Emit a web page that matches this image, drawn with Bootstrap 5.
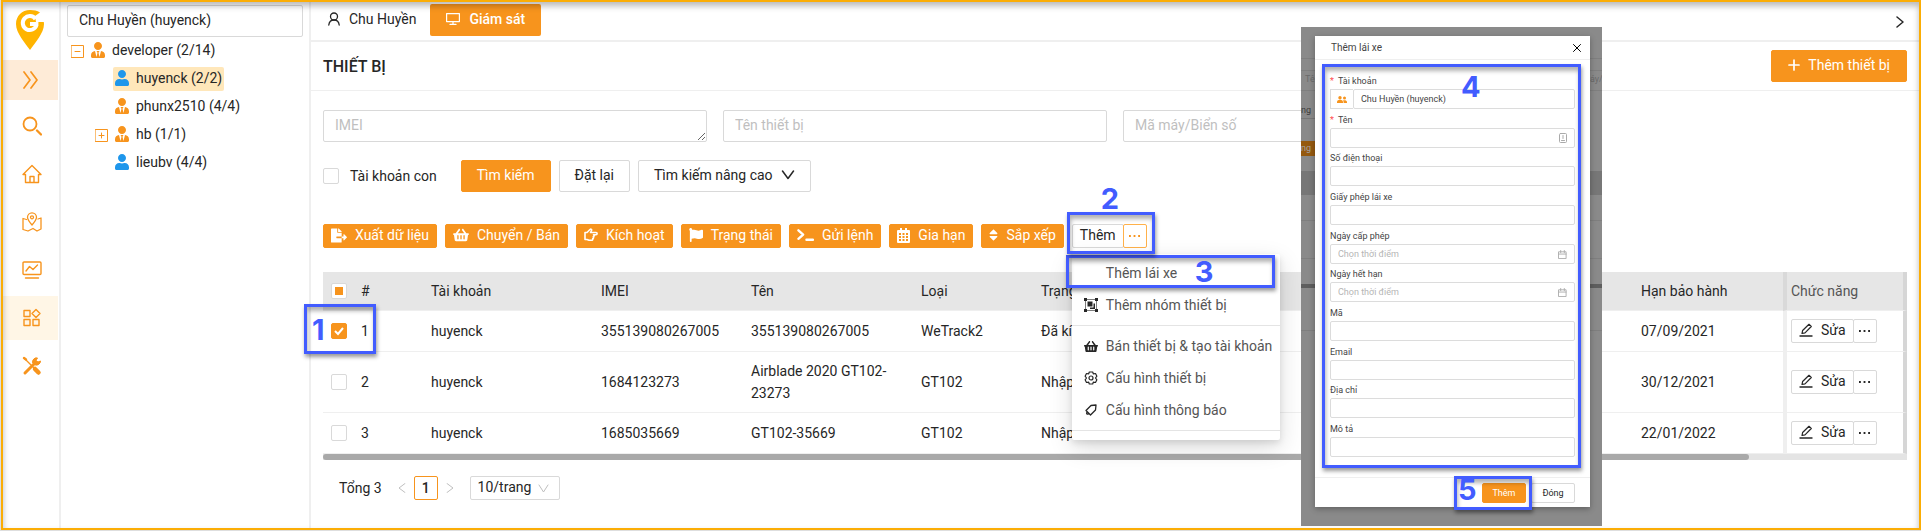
<!DOCTYPE html>
<html lang="vi">
<head>
<meta charset="utf-8">
<meta name="viewport" content="width=device-width, initial-scale=1">
<title>Thiết bị</title>
<link rel="stylesheet" href="https://cdn.jsdelivr.net/npm/bootstrap@5.3.0/dist/css/bootstrap.min.css">
<style>
:root { --brand: #f7941d; --line: #d9d9d9; --soft: #efefef; --mark-blue: #425cff; }
body { font: 400 14px/22px Roboto, "Open Sans", sans-serif; color: #262626; background: #dedede; }
a { color: inherit; text-decoration: none; }
svg { flex: none; display: block; }
.ic { fill: currentColor; }
.ln { fill: none; stroke: currentColor; stroke-linecap: round; stroke-linejoin: round; }

.frame { margin: 0 0 1px 1px; min-height: calc(100vh - 1px); border: 2px solid #fbad05; background: #fff; }
.frame::after { content: ""; position: absolute; inset: 0; pointer-events: none; z-index: 30; box-shadow: inset 0 4px 6px rgba(0,0,0,.28); }

/* icon rail */
.rail { width: 58px; border-right: 2px solid var(--soft); color: var(--brand); }
.rail-logo { height: 58px; padding: 8px 0 0 13px; }
.rail-link { height: 44px; margin-right: 1px; padding-left: 3px; display: flex; align-items: center; justify-content: center; }
.rail-toggle { height: 40px; padding-left: 0; background: #feebd7; }
.rail-link.active { background: #fff6e6; }

/* account tree */
.side { width: 250px; border-right: 2px solid var(--soft); padding: 3px 6px 0; }
.field { border: 1px solid var(--line); border-radius: 2px; height: 32px; padding: 3px 11px 5px; font-size: 14px; line-height: 22px; color: #262626; width: 100%; background: #fff; }
.field::placeholder { color: #bfbfbf; opacity: 1; }
.tree { list-style: none; margin: 0; padding: 0; }
.tree .tree { padding-left: 24px; }
.tree-row { height: 28px; display: flex; align-items: center; padding-left: 4px; }
.tree-box { width: 18px; color: var(--brand); }
.tree-name { height: 24px; display: flex; align-items: center; gap: 7px; padding: 0 2px 2px; border-radius: 2px; white-space: nowrap; }
.tree-name.active { background: #ffe7ba; }

/* main */
.tabs { height: 40px; border-bottom: 2px solid var(--soft); padding: 2px 15px 0 6px; }
.tab-item { height: 32px; padding: 0 14px 2px 11px; display: flex; align-items: center; gap: 9px; }
.tab-item.active { background: var(--brand); color: #fff; border-radius: 2px; padding: 0 16px 2px; font-weight: 500; }
.head { height: 49px; border-bottom: 1px solid var(--soft); padding: 0 12px; }
.head h1 { font-size: 16px; line-height: 24px; font-weight: 500; margin: 0; padding-top: 2px; }
.bt { height: 32px; border: 1px solid var(--line); border-radius: 2px; background: #fff; color: #262626; padding: 0 15px 2px; font-size: 14px; line-height: 22px; display: inline-flex; align-items: center; justify-content: center; gap: 8px; white-space: nowrap; }
.bt-main { background: var(--brand); border-color: var(--brand); color: #fff; }
.bt-low { height: 24px; padding: 0 7px 2px; }
.bt-dots { width: 24px; margin-left: -1px; padding-bottom: 0; }
.bt-lit { border-color: #ffb14a; }
.c-orange { color: var(--brand); } .c-blue { color: #1e96eb; }
.content { padding: 19px 12px 0; }
.filters { margin-top: 18px; }
.with-tick { gap: 11px; }
.tick { appearance: none; width: 16px; height: 16px; border: 1px solid var(--line); border-radius: 2px; margin: 0; background: #fff center/contain no-repeat; flex: none; display: block; }
.tick:checked { background-color: var(--brand); border-color: var(--brand); background-image: url("data:image/svg+xml,%3Csvg xmlns='http://www.w3.org/2000/svg' viewBox='0 0 14 14'%3E%3Cpath d='M3 7l3 3 5-6' fill='none' stroke='white' stroke-width='2'/%3E%3C/svg%3E"); }
.tick:indeterminate { background: linear-gradient(var(--brand), var(--brand)) center/8px 8px no-repeat #fff; }

.grid-wrap { margin-top: 24px; }
.devices { width: 100%; table-layout: fixed; border-collapse: separate; border-spacing: 0; }
.devices th, .devices td { padding: 8px; border-bottom: 1px solid var(--soft); font-weight: 400; vertical-align: middle; }
.devices th { background: #e6e6e6; }
.devices tbody td { padding: 9px 8px; }
.devices tbody .two-line { padding: 8px; }
.devices tr > :last-child { border-left: 4px solid var(--soft); border-right: 4px solid #d6d6d6; padding: 0 4px; }
.devices th:last-child { border-left-color: #d9d9d9; color: #555; }
.track { height: 6px; background: #e4e4e4; }
.thumb { height: 6px; width: 90%; background: #a9a9a9; border-radius: 3px; }

.pager { color: #bfbfbf; }
.total { color: #262626; margin-right: 16px; }
.page-now { color: #262626; width: 24px; height: 24px; border: 1px solid var(--brand); border-radius: 2px; display: flex; align-items: center; justify-content: center; font-weight: 500; margin: 0 8px; }
.sizer { position: relative; margin-left: 16px; }
.sizer select { appearance: none; width: 90px; height: 24px; padding: 0 7px 2px; line-height: 20px; }
.sizer svg { position: absolute; right: 11px; top: 8px; pointer-events: none; }

/* drop-down over the table */
.more { position: absolute; top: 30px; left: 0; width: 208px; padding: 3px 0 5px; background: #fff; z-index: 5; border-radius: 2px; box-shadow: 0 3px 6px rgba(0,0,0,.1), 0 8px 24px rgba(0,0,0,.14); color: #555; }
.more a { height: 32px; display: flex; align-items: center; gap: 8px; padding-left: 12px; white-space: nowrap; }
.more svg { color: #262626; }
.more hr { margin: 4px 0; border: 0; border-top: 1px solid #e4e4e4; opacity: 1; }

/* numbered guide marks */
.guide { position: absolute; border: 3px solid var(--mark-blue); pointer-events: none; z-index: 8; box-shadow: 1px 3px 4px rgba(0,0,0,.4), inset 1px 4px 4px rgba(0,0,0,.3); }
.guide b { position: absolute; font: 700 29px/24px Inter, "Open Sans", sans-serif; color: var(--mark-blue); }
.g1 { left: -27px; top: -19px; width: 72px; height: 50px; } .g1 b { left: 5px; top: 11px; }
.g2 { left: -5px; top: -12px; width: 88px; height: 42px; } .g2 b { left: 31px; top: -28px; }
.g3 { left: -6px; top: 1px; width: 209px; height: 33px; } .g3 b { left: 126px; top: 2px; }
.g4 { inset: 4px 9px 9px 7px; } .g4 b { left: 136px; top: 8px; }
.g5 { left: -28px; top: -7px; width: 78px; height: 34px; } .g5 b { left: 1px; top: -1px; }

/* floating form */
.veil { position: absolute; top: 25px; bottom: 2px; right: 317px; width: 301px; z-index: 10; overflow: hidden; padding: 9px 12px 19px 14px; color: #3c3c3c;
  background:
    linear-gradient(#7f7f7f, #7f7f7f) 0 31px/100% 1px no-repeat,
    linear-gradient(#7f7f7f, #7f7f7f) 0 43px/100% 1px no-repeat,
    linear-gradient(#7f7f7f, #7f7f7f) 0 63px/100% 1px no-repeat,
    linear-gradient(#777, #777) 0 144px/100% 24px no-repeat,
    linear-gradient(#7f7f7f, #7f7f7f) 0 193px/100% 1px no-repeat,
    linear-gradient(#7f7f7f, #7f7f7f) 0 231px/100% 1px no-repeat,
    linear-gradient(#5e5e5e, #5e5e5e) 0 257px/100% 4px no-repeat,
    linear-gradient(#7f7f7f, #7f7f7f) 0 303px/100% 1px no-repeat,
    #8a8a8a; }
.ghost { position: absolute; font-size: 9px; line-height: 15px; left: 0; white-space: nowrap; }
.gh-a { top: 45px; left: 4px; color: #6b6b6b; }
.gh-b { top: 76px; border-bottom: 1px solid #777; width: 14px; }
.gh-c { top: 114px; width: 14px; background: #95590f; color: #a3a3a3; }
.gh-d { top: 45px; left: 289px; color: #6b6b6b; }
.sheet { position: relative; height: 100%; background: #fff; font-size: 9px; line-height: 12px; box-shadow: 0 2px 6px rgba(0,0,0,.3); color: #444; }
.sheet-head { height: 24px; border-bottom: 1px solid var(--soft); padding: 0 9px 0 16px; }
.sheet-head h2 { font-size: 10px; line-height: 12px; font-weight: 400; margin: 0; }
.sheet-close { border: 0; background: none; padding: 0; }
.sheet-body { padding: 15px 15px 20px; }
.sheet-body .field, .sheet .bt { height: 20px; padding: 0 7px; font-size: 9px; line-height: 12px; }
.sheet-body .field { display: block; flex: 1; min-width: 0; color: #444; border-color: #dcdcdc; }
.sheet-body .field::placeholder { color: #b5b5b5; }
.sheet-body label { display: block; margin-bottom: 2px; }
.sheet-body .must::before { content: "*"; color: #ff4d4f; margin-right: 4px; }
.addon { width: 23px; border: 1px solid #dcdcdc; border-right: 0; display: flex; align-items: center; justify-content: center; color: var(--brand); }
.in-end { position: absolute; right: 8px; bottom: 5px; color: #aaa; }
.sheet-foot { height: 30px; border-top: 1px solid var(--soft); padding: 0 15px; gap: 5px; }
.sheet-foot .bt { width: 44px; }
</style>
<script src="https://cdn.jsdelivr.net/npm/bootstrap@5.3.0/dist/js/bootstrap.bundle.min.js"></script>
</head>
<body>
<svg width="0" height="0" class="position-absolute" aria-hidden="true">
  <symbol id="tie" viewBox="0 0 448 512"><path d="M224 256c70.700 0 128-57.300 128-128S294.700 0 224 0 96 57.300 96 128s57.300 128 128 128zm95.800 32.600L272 480l-32-136 32-56h-96l32 56-32 136-47.800-191.400C56.900 292 0 350.300 0 422.400V464c0 26.500 21.500 48 48 48h352c26.500 0 48-21.500 48-48v-41.600c0-72.100-56.900-130.400-128.200-133.800z"/></symbol>
  <symbol id="user" viewBox="0 0 448 512"><path d="M224 256c70.700 0 128-57.300 128-128S294.700 0 224 0 96 57.300 96 128s57.300 128 128 128zm89.600 32h-16.700c-22.200 10.200-46.900 16-72.900 16s-50.600-5.800-72.900-16h-16.700C60.200 288 0 348.200 0 422.400V464c0 26.500 21.500 48 48 48h352c26.500 0 48-21.500 48-48v-41.600c0-74.200-60.200-134.400-134.400-134.400z"/></symbol>
  <symbol id="basket" viewBox="0 0 576 512"><path d="M576 216v16c0 13.255-10.745 24-24 24h-8l-26.113 182.788C514.509 462.435 494.257 480 470.370 480H105.630c-23.887 0-44.139-17.565-47.518-41.212L32 256h-8c-13.255 0-24-10.745-24-24v-16c0-13.255 10.745-24 24-24h67.341l106.780-146.821c10.395-14.292 30.407-17.453 44.701-7.058 14.293 10.395 17.453 30.408 7.058 44.701L170.477 192h235.046L326.120 82.821c-10.395-14.292-7.234-34.306 7.059-44.701 14.291-10.395 34.306-7.235 44.701 7.058L484.659 192H552c13.255 0 24 10.745 24 24zM312 392V280c0-13.255-10.745-24-24-24s-24 10.745-24 24v112c0 13.255 10.745 24 24 24s24-10.745 24-24zm112 0V280c0-13.255-10.745-24-24-24s-24 10.745-24 24v112c0 13.255 10.745 24 24 24s24-10.745 24-24zm-224 0V280c0-13.255-10.745-24-24-24s-24 10.745-24 24v112c0 13.255 10.745 24 24 24s24-10.745 24-24z"/></symbol>
  <symbol id="pen" viewBox="0 0 14 14"><path d="M1 13h12" stroke-width="1.400"/><path d="M3 10.500l.6-3L10 1.300l2.300 2.200-6.300 6.300z" stroke-width="1.200"/></symbol>
  <symbol id="dots" viewBox="0 0 12 4"><path d="M0 1h2v2H0zM5 1h2v2H5zM10 1h2v2h-2z"/></symbol>
  <symbol id="cal" viewBox="0 0 10 10"><path d="M1 2h8v7.500H1zM1 4.500h8M3 .5v2.500M7 .5v2.500"/></symbol>
</svg>

<div class="frame position-relative d-flex">
  <nav class="rail flex-shrink-0" aria-label="Chính">
    <a href="#" class="rail-logo d-block" aria-label="Trang chủ">
      <svg width="28" height="40" viewBox="0 0 28 40"><path fill="#ffb400" d="M14 0C6 0 0 6 0 14c0 9 9 19 14 26 5-7 14-17 14-26l-.2-2H20l-1-6 5-3.500C21 .7 18 0 14 0z"/><path fill="none" stroke="#fff" stroke-width="4" d="M19.500 9A7 7 0 1 0 20.500 15M22.400 14H14"/></svg>
    </a>
    <a href="#" class="rail-link rail-toggle" aria-label="Mở rộng"><svg class="ln" width="16" height="18" viewBox="0 0 16 18" stroke-width="1.700"><path d="M1 1l6 8-6 8M8 1l6 8-6 8"/></svg></a>
    <div class="d-flex flex-column gap-1 pt-1">
      <a href="#" class="rail-link" aria-label="Tìm"><svg class="ln" width="20" height="20" viewBox="0 0 20 20" stroke-width="1.800"><circle cx="8" cy="8" r="6.500"/><path d="M15 14.500l4 4" stroke-width="2.300"/></svg></a>
      <a href="#" class="rail-link" aria-label="Nhà"><svg class="ln" width="20" height="20" viewBox="0 0 20 20" stroke-width="1.400"><path d="M1 10.500L10 1.500l9 9h-2.500v8h-13v-8zM8 18v-5.500h4V18"/></svg></a>
      <a href="#" class="rail-link" aria-label="Bản đồ"><svg class="ln" width="20" height="20" viewBox="0 0 20 20" stroke-width="1.300"><path d="M10 13C7 9.500 5.500 7.500 5.500 5.300a4.500 4.500 0 0 1 9 0C14.500 7.500 13 9.500 10 13z"/><circle cx="10" cy="5.300" r="1.500"/><path d="M4.500 7.500L1 6.500v11l5 1.500 5-2.500 4 2.500 4-2V6l-3 1"/></svg></a>
      <a href="#" class="rail-link" aria-label="Báo cáo"><svg class="ln" width="20" height="20" viewBox="0 0 20 20" stroke-width="1.400"><rect x="1" y="2" width="18" height="12.500" rx="1"/><path d="M4 11l3.500-4.500 3.500 3 4.500-4.500M3.500 18h13"/></svg></a>
      <a href="#" class="rail-link active" aria-label="Quản lý"><svg class="ln" width="20" height="20" viewBox="0 0 20 20" stroke-width="1.400"><path d="M2 2.500h6v6H2zM2 11.500h6v6H2zM11 11.500h6v6h-6zM14 1.500l4 4-4 4-4-4z"/></svg></a>
      <a href="#" class="rail-link" aria-label="Công cụ"><svg class="ln" width="20" height="20" viewBox="0 0 20 20"><path d="M3 17L13 7" stroke-width="3"/><path d="M10.500 6.500a4 4 0 0 1 5-4.500l-1.500 2.500 2 1.500 2.500-1a4 4 0 0 1-5 4z" fill="currentColor" stroke-width="1"/><path d="M2.500 2.500l9 9" stroke-width="1.400"/><path d="M2 2l2 1.500" stroke-width="2.400"/><path d="M13 13l3.500 3.500" stroke-width="4.500"/></svg></a>
    </div>
  </nav>

  <aside class="side flex-shrink-0">
    <input class="field d-block" type="text" value="Chu Huyền (huyenck)" aria-label="Tài khoản">
    <ul class="tree">
      <li>
        <div class="tree-row">
          <span class="tree-box"><svg class="ln" width="13" height="13" viewBox="0 0 13 13"><path d="M.5.5h12v12H.5zM4 6.500h5"/></svg></span>
          <a href="#" class="tree-name"><svg class="ic c-orange" width="14" height="16"><use href="#tie"/></svg>developer (2/14)</a>
        </div>
        <ul class="tree">
          <li class="tree-row"><span class="tree-box"></span><a href="#" class="tree-name active"><svg class="ic c-blue" width="14" height="16"><use href="#user"/></svg>huyenck (2/2)</a></li>
          <li class="tree-row"><span class="tree-box"></span><a href="#" class="tree-name"><svg class="ic c-orange" width="14" height="16"><use href="#tie"/></svg>phunx2510 (4/4)</a></li>
          <li class="tree-row"><span class="tree-box"><svg class="ln" width="13" height="13" viewBox="0 0 13 13"><path d="M.5.5h12v12H.5zM4 6.500h5M6.500 4v5"/></svg></span><a href="#" class="tree-name"><svg class="ic c-orange" width="14" height="16"><use href="#tie"/></svg>hb (1/1)</a></li>
          <li class="tree-row"><span class="tree-box"></span><a href="#" class="tree-name"><svg class="ic c-blue" width="14" height="16"><use href="#user"/></svg>lieubv (4/4)</a></li>
        </ul>
      </li>
    </ul>
  </aside>

  <main class="flex-grow-1 overflow-visible">
    <div class="tabs d-flex align-items-start">
      <a href="#" class="tab-item"><svg class="ln" width="12" height="14" viewBox="0 0 12 14" stroke-width="1.300"><circle cx="6" cy="4.500" r="3.500"/><path d="M.8 13c.3-3 2-5 5.200-5s4.900 2 5.200 5"/></svg>Chu Huyền</a>
      <a href="#" class="tab-item active"><svg class="ln" width="14" height="12" viewBox="0 0 14 12" stroke-width="1.200"><path d="M.6.6h12.800v8H.6zM7 9v2M4 11.400h6"/></svg>Giám sát</a>
      <svg class="ln ms-auto align-self-center" width="8" height="12" viewBox="0 0 8 12" stroke-width="1.500"><path d="M1 1l6 5-6 5"/></svg>
    </div>
    <div class="head d-flex align-items-center justify-content-between">
      <h1>THIẾT BỊ</h1>
      <button class="bt bt-main px-3" type="button"><svg class="ln" width="12" height="12" viewBox="0 0 12 12" stroke-width="1.700"><path d="M6 1v10M1 6h10"/></svg>Thêm thiết bị</button>
    </div>

    <div class="content">
      <div class="row gx-3">
        <div class="col-3"><textarea class="field d-block" rows="1" placeholder="IMEI" aria-label="IMEI"></textarea></div>
        <div class="col-3"><input class="field d-block" type="text" placeholder="Tên thiết bị" aria-label="Tên thiết bị"></div>
        <div class="col-3"><input class="field d-block" type="text" placeholder="Mã máy/Biển số" aria-label="Mã máy/Biển số"></div>
      </div>
      <div class="filters d-flex align-items-center gap-2">
        <label class="with-tick d-flex align-items-center me-3"><input class="tick" type="checkbox">Tài khoản con</label>
        <button class="bt bt-main" type="button">Tìm kiếm</button>
        <button class="bt" type="button">Đặt lại</button>
        <button class="bt" type="button">Tìm kiếm nâng cao<svg class="ln" width="14" height="10" viewBox="0 0 14 10" stroke-width="1.500"><path d="M1.500 1L7 8.500 12.500 1"/></svg></button>
      </div>
      <div class="d-flex align-items-center gap-2 pt-3 mt-3">
        <button class="bt bt-main bt-low" type="button"><svg class="ic" width="16" height="15" viewBox="0 0 576 512"><path d="M384 121.900c0-6.300-2.500-12.400-7-16.900L279.100 7c-4.500-4.500-10.600-7-17-7H256v128h128zM571 308l-95.700-96.400c-10.100-10.100-27.400-3-27.400 11.300V288h-64v64h64v65.200c0 14.300 17.300 21.400 27.400 11.300L571 332c6.600-6.600 6.600-17.400 0-24zm-379 28v-32c0-8.800 7.200-16 16-16h176V160H248c-13.200 0-24-10.800-24-24V0H24C10.700 0 0 10.700 0 24v464c0 13.300 10.700 24 24 24h336c13.300 0 24-10.700 24-24V352H208c-8.800 0-16-7.200-16-16z"/></svg>Xuất dữ liệu</button>
        <button class="bt bt-main bt-low" type="button"><svg class="ic" width="16" height="14"><use href="#basket"/></svg>Chuyển / Bán</button>
        <button class="bt bt-main bt-low" type="button"><svg class="ln" width="14" height="14" viewBox="0 0 14 14" stroke-width="1.600"><path d="M1 4.500h2L6 1.500c1-.8 2 0 1.500 1L6.500 4.500H12c1.500 0 1.500 2.200 0 2.200H9.500c1 .5.800 1.900-.3 2 .8.600.4 1.800-.5 1.900.4.900-.2 1.700-1.200 1.700H5L3 11.500H1z"/></svg>Kích hoạt</button>
        <button class="bt bt-main bt-low" type="button"><svg class="ic" width="14" height="14" viewBox="0 0 512 512"><path d="M349.565 98.783C295.978 98.783 251.721 64 184.348 64c-24.955 0-47.309 4.384-68.045 12.013a55.947 55.947 0 0 0 3.586-23.562C118.117 24.015 94.806 1.206 66.338.048 34.345-1.254 8 24.296 8 56c0 19.026 9.497 35.825 24 45.945V488c0 13.255 10.745 24 24 24h16c13.255 0 24-10.745 24-24v-94.400c28.311-12.064 63.582-22.122 114.435-22.122 53.588 0 97.844 34.783 165.217 34.783 48.169 0 86.667-16.294 122.505-40.858C506.840 359.452 512 349.571 512 339.045v-243.100c0-23.393-24.269-38.870-45.485-29.016-34.338 15.948-76.454 31.854-116.950 31.854z"/></svg>Trạng thái</button>
        <button class="bt bt-main bt-low" type="button"><svg class="ln" width="17" height="14" viewBox="0 0 18 14" stroke-width="2.500"><path d="M1.500 2l5 4.500-5 4.500M10 12h7"/></svg>Gửi lệnh</button>
        <button class="bt bt-main bt-low" type="button"><svg class="ic" width="13" height="15" viewBox="0 0 13 15"><path fill-rule="evenodd" d="M3 0h2v2h3V0h2v2h2a1 1 0 0 1 1 1v11a1 1 0 0 1-1 1H1a1 1 0 0 1-1-1V3a1 1 0 0 1 1-1h2zM2 5v2h2V5zm3.500 0v2h2V5zM9 5v2h2V5zM2 8v2h2V8zm3.500 0v2h2V8zM9 8v2h2V8zM2 11v2h2v-2zm3.500 0v2h2v-2zM9 11v2h2v-2z"/></svg>Gia hạn</button>
        <button class="bt bt-main bt-low" type="button"><svg class="ic" width="9" height="14" viewBox="0 0 320 512"><path d="M41 288h238c21.400 0 32.100 25.900 17 41L177 448c-9.400 9.400-24.600 9.400-33.900 0L24 329c-15.100-15.100-4.400-41 17-41zm255-105L177 64c-9.400-9.400-24.600-9.400-33.900 0L24 183c-15.100 15.100-4.400 41 17 41h238c21.400 0 32.100-25.900 17-41z"/></svg>Sắp xếp</button>
        <div class="position-relative d-flex">
          <button class="bt bt-low" type="button">Thêm</button>
          <button class="bt bt-low bt-dots bt-lit c-orange" type="button" aria-label="Khác"><svg class="ic" width="11" height="4"><use href="#dots"/></svg></button>
          <div class="guide g2"><b>2</b></div>
          <div class="more">
            <a href="#"><svg width="14" height="14"></svg>Thêm lái xe</a>
            <a href="#"><svg class="ic" width="14" height="14" viewBox="0 0 14 14"><path d="M0 0h3v3H0zM11 0h3v3h-3zM0 11h3v3H0zM11 11h3v3h-3zM3.500 3.500h5v5h-5zM9.500 5.500h1.500v5.500H6V9.500h3.500z"/><path d="M1.500 1.500h11v11h-11z" fill="none" stroke="currentColor" stroke-width=".6"/></svg>Thêm nhóm thiết bị</a>
            <hr>
            <a href="#"><svg class="ic" width="14" height="13"><use href="#basket"/></svg>Bán thiết bị &amp; tạo tài khoản</a>
            <a href="#"><svg class="ln" width="14" height="14" viewBox="0 0 14 14" stroke-width="1.200"><path d="M5.300 1h3.400l.6 1.800 2.200-.3 1.400 2.700L11.500 7l1.400 1.800-1.400 2.700-2.200-.3-.6 1.800H5.300l-.6-1.800-2.200.3-1.400-2.700L2.500 7 1.100 5.200l1.400-2.700 2.200.3z"/><circle cx="7" cy="7" r="2"/></svg>Cấu hình thiết bị</a>
            <a href="#"><svg class="ln" width="14" height="14" viewBox="0 0 14 14" stroke-width="1.300"><path d="M2 7.500l5-5L12 2l-.5 5-5 5zM3 9c-1 1.500 0 2.500 1.500 2"/></svg>Cấu hình thông báo</a>
            <hr>
            <div class="guide g3"><b>3</b></div>
          </div>
        </div>
      </div>

      <div class="grid-wrap">
        <table class="devices">
          <colgroup><col style="width:30px"><col style="width:70px"><col style="width:170px"><col style="width:150px"><col style="width:170px"><col style="width:120px"><col><col style="width:150px"><col style="width:124px"></colgroup>
          <thead>
            <tr><th><input class="tick" id="all" type="checkbox" aria-label="Chọn tất cả"></th><th>#</th><th>Tài khoản</th><th>IMEI</th><th>Tên</th><th>Loại</th><th>Trạng thái</th><th>Hạn bảo hành</th><th>Chức năng</th></tr>
          </thead>
          <tbody>
            <tr><td><div class="position-relative"><input class="tick" type="checkbox" checked aria-label="Chọn 1"><div class="guide g1"><b>1</b></div></div></td><td>1</td><td>huyenck</td><td>355139080267005</td><td>355139080267005</td><td>WeTrack2</td><td>Đã kích hoạt</td><td>07/09/2021</td>
              <td><div class="d-flex"><button class="bt bt-low" type="button"><svg class="ln" width="14" height="14"><use href="#pen"/></svg>Sửa</button><button class="bt bt-low bt-dots" type="button" aria-label="Khác"><svg class="ic" width="11" height="4"><use href="#dots"/></svg></button></div></td></tr>
            <tr><td><input class="tick" type="checkbox" aria-label="Chọn 2"></td><td>2</td><td>huyenck</td><td>1684123273</td><td class="two-line">Airblade 2020 GT102-23273</td><td>GT102</td><td>Nhập kho</td><td>30/12/2021</td>
              <td><div class="d-flex"><button class="bt bt-low" type="button"><svg class="ln" width="14" height="14"><use href="#pen"/></svg>Sửa</button><button class="bt bt-low bt-dots" type="button" aria-label="Khác"><svg class="ic" width="11" height="4"><use href="#dots"/></svg></button></div></td></tr>
            <tr><td><input class="tick" type="checkbox" aria-label="Chọn 3"></td><td>3</td><td>huyenck</td><td>1685035669</td><td>GT102-35669</td><td>GT102</td><td>Nhập kho</td><td>22/01/2022</td>
              <td><div class="d-flex"><button class="bt bt-low" type="button"><svg class="ln" width="14" height="14"><use href="#pen"/></svg>Sửa</button><button class="bt bt-low bt-dots" type="button" aria-label="Khác"><svg class="ic" width="11" height="4"><use href="#dots"/></svg></button></div></td></tr>
          </tbody>
        </table>
        <div class="track"><div class="thumb"></div></div>
      </div>
      <div class="pager d-flex align-items-center pt-3 ps-3">
        <span class="total">Tổng 3</span>
        <svg class="ln" width="8" height="10" viewBox="0 0 8 10"><path d="M7 .5L1 5l6 4.500"/></svg>
        <a href="#" class="page-now">1</a>
        <svg class="ln" width="8" height="10" viewBox="0 0 8 10"><path d="M1 .5L7 5 1 9.500"/></svg>
        <div class="sizer"><select class="field d-block" aria-label="Số dòng"><option>10/trang</option></select><svg class="ln" width="11" height="9" viewBox="0 0 11 9"><path d="M1 1l4.500 7L10 1"/></svg></div>
      </div>
    </div>
  </main>

  <div class="veil">
    <span class="ghost gh-a">Tê</span><span class="ghost gh-b">ng</span><span class="ghost gh-c">ng</span><span class="ghost gh-d">áy/</span>
    <div class="sheet d-flex flex-column" role="dialog" aria-labelledby="dlg">
      <div class="sheet-head d-flex align-items-center justify-content-between">
        <h2 id="dlg">Thêm lái xe</h2>
        <button class="sheet-close" type="button" aria-label="Đóng"><svg class="ln" width="8" height="8" viewBox="0 0 8 8"><path d="M.5.5l7 7M7.500.5l-7 7"/></svg></button>
      </div>
      <form class="sheet-body position-relative flex-grow-1 d-flex flex-column justify-content-between">
        <div><label class="must" for="f1">Tài khoản</label><div class="d-flex"><span class="addon"><svg class="ic" width="10" height="7" viewBox="0 0 10 7"><circle cx="3" cy="1.700" r="1.700"/><circle cx="7.500" cy="2" r="1.500"/><path d="M0 7V6c0-3 6-3 6 0v1zM6.600 7c.1-1.200-.2-2-.6-2.600C8 3.800 10 4.500 10 6v1z"/></svg></span><input class="field" id="f1" type="text" value="Chu Huyền (huyenck)"></div></div>
        <div class="position-relative"><label class="must" for="f2">Tên</label><input class="field" id="f2" type="text"><svg class="ln in-end" width="8" height="10" viewBox="0 0 8 10"><rect x=".5" y=".5" width="7" height="9" rx="1"/><path d="M2.500 7.500h3M4 2.500v3"/></svg></div>
        <div><label for="f3">Số điện thoại</label><input class="field" id="f3" type="text"></div>
        <div><label for="f4">Giấy phép lái xe</label><input class="field" id="f4" type="text"></div>
        <div class="position-relative"><label for="f5">Ngày cấp phép</label><input class="field" id="f5" type="text" placeholder="Chọn thời điểm"><svg class="ln in-end" width="9" height="9"><use href="#cal"/></svg></div>
        <div class="position-relative"><label for="f6">Ngày hết hạn</label><input class="field" id="f6" type="text" placeholder="Chọn thời điểm"><svg class="ln in-end" width="9" height="9"><use href="#cal"/></svg></div>
        <div><label for="f7">Mã</label><input class="field" id="f7" type="text"></div>
        <div><label for="f8">Email</label><input class="field" id="f8" type="text"></div>
        <div><label for="f9">Địa chỉ</label><input class="field" id="f9" type="text"></div>
        <div><label for="f10">Mô tả</label><input class="field" id="f10" type="text"></div>
        <div class="guide g4"><b>4</b></div>
      </form>
      <div class="sheet-foot d-flex align-items-center justify-content-end">
        <div class="position-relative"><button class="bt bt-main d-flex" type="button">Thêm</button><div class="guide g5"><b>5</b></div></div>
        <button class="bt" type="button">Đóng</button>
      </div>
    </div>
  </div>
</div>
<script>document.getElementById('all').indeterminate = true;</script>
</body>
</html>
